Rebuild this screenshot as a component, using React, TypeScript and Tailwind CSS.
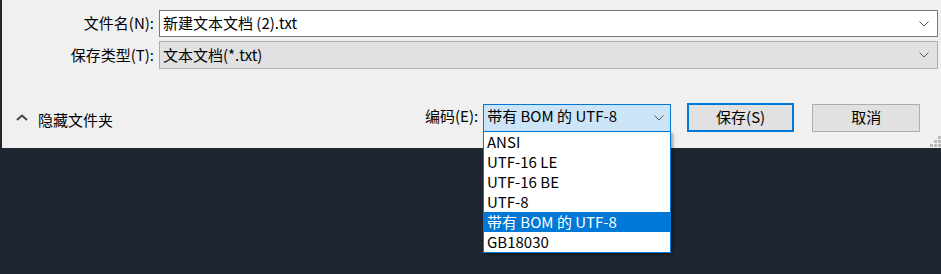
const font = { fontFamily: '"Noto Sans CJK SC", "Noto Sans", sans-serif' };

function Chevron({ className }: { className?: string }) {
  return (
    <svg width="10" height="6" viewBox="0 0 10 6" className={className}>
      <polyline points="0.5,0.5 5,5 9.5,0.5" fill="none" stroke="#5a5a5a" strokeWidth="1" />
    </svg>
  );
}

const encodings = ["ANSI", "UTF-16 LE", "UTF-16 BE", "UTF-8", "带有 BOM 的 UTF-8", "GB18030"];

export default function App() {
  const selected = "带有 BOM 的 UTF-8";

  return (
    <div className="relative w-[941px] h-[274px] bg-[#1f2631] overflow-hidden text-[15px] text-black" style={font}>
      <div className="relative ml-[2px] h-[148px] bg-[#f0f0f0] pt-[10px]">
        <div className="grid grid-cols-[152px_1fr] gap-x-[5px] gap-y-[4px] pr-[3px]">
          <div className="flex items-center justify-end h-[27px]">文件名(N):</div>
          <div className="flex items-center justify-between h-[27px] bg-white border border-[#7a7a7a] pl-[3px] pr-[8px]">
            <span>新建文本文档 (2).txt</span>
            <Chevron />
          </div>
          <div className="flex items-center justify-end h-[28px]">保存类型(T):</div>
          <div className="flex items-center justify-between h-[28px] bg-[#e1e1e1] border border-[#adadad] pl-[3px] pr-[8px]">
            <span>文本文档(*.txt)</span>
            <Chevron />
          </div>
        </div>

        <div className="flex items-center mt-[34px] h-[29px]">
          <div className="flex items-center gap-[10px] pl-[14px] w-[423px]">
            <svg width="12" height="7" viewBox="0 0 12 7">
              <polyline points="1,6 6,1.5 11,6" fill="none" stroke="#444" strokeWidth="2" />
            </svg>
            <span className="mt-[6px]">隐藏文件夹</span>
          </div>
          <span className="mr-[5px] -mt-[2px]">编码(E):</span>
          <div className="flex items-center justify-between w-[188px] h-[28px] bg-[#cce4f7] border border-[#0078d7] pl-[3px] pr-[6px]">
            <span className="-mt-[2px]">{selected}</span>
            <Chevron />
          </div>
          <button className="ml-[16px] w-[107px] h-[29px] bg-[#e1e1e1] border-2 border-[#0078d7] flex items-center justify-center">
            保存(S)
          </button>
          <button className="ml-[18px] w-[108px] h-[28px] bg-[#e1e1e1] border border-[#adadad] flex items-center justify-center">
            取消
          </button>
        </div>

        <div className="absolute right-0 bottom-[1px] grid grid-cols-3 gap-[1px]">
          <span className="w-[3px] h-[3px]" />
          <span className="w-[3px] h-[3px]" />
          <span className="w-[3px] h-[3px] bg-[#b9b9b9]" />
          <span className="w-[3px] h-[3px]" />
          <span className="w-[3px] h-[3px] bg-[#b9b9b9]" />
          <span className="w-[3px] h-[3px] bg-[#b9b9b9]" />
          <span className="w-[3px] h-[3px] bg-[#b9b9b9]" />
          <span className="w-[3px] h-[3px] bg-[#b9b9b9]" />
          <span className="w-[3px] h-[3px] bg-[#b9b9b9]" />
        </div>
      </div>

      <div className="absolute left-[483px] top-[131px] w-[188px] bg-white border border-[#0078d7] shadow-[2px_2px_3px_rgba(0,0,0,0.35)]">
        {encodings.map((e) => (
          <div
            key={e}
            className={
              e === selected
                ? "h-[20px] leading-[20px] pl-[3px] bg-[#0078d7] text-white"
                : "h-[20px] leading-[20px] pl-[3px]"
            }
          >
            {e}
          </div>
        ))}
      </div>
    </div>
  );
}
